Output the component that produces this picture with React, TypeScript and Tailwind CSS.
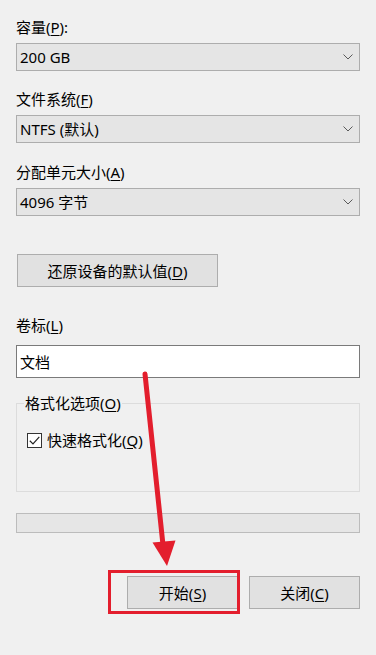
import type { ReactNode } from 'react';

const font = 'font-["Noto_Sans","Noto_Sans_CJK_SC",sans-serif]';

function Label({ children, className = '' }: { children: ReactNode; className?: string }) {
  return <div className={`h-5 leading-5 ${className}`}>{children}</div>;
}

function Combo({ value, className = '' }: { value: string; className?: string }) {
  return (
    <div
      className={`flex h-[28px] items-center justify-between border border-[#adadad] bg-[#e5e5e5] pl-[3px] pr-[6px] ${className}`}
    >
      <span className="leading-5">{value}</span>
      <svg width="10" height="6" viewBox="0 0 10 6" fill="none">
        <path d="M0.5 0.5 L5 5 L9.5 0.5" stroke="#5a5a5a" strokeWidth="1" />
      </svg>
    </div>
  );
}

function Button({ children, className = '' }: { children: ReactNode; className?: string }) {
  return (
    <div
      className={`flex h-[33px] items-center justify-center border border-[#adadad] bg-[#e1e1e1] leading-5 ${className}`}
    >
      {children}
    </div>
  );
}

export default function App() {
  return (
    <div className={`relative min-h-screen w-full bg-[#f0f0f0] px-4 pt-[17px] pb-10 text-[15px] text-black ${font}`}>
      <Label>
        容量(<span className="underline underline-offset-2">P</span>):
      </Label>
      <Combo value="200 GB" className="mt-[6px]" />

      <Label className="mt-[18px]">
        文件系统(<span className="underline underline-offset-2">F</span>)
      </Label>
      <Combo value="NTFS (默认)" className="mt-[6px]" />

      <Label className="mt-[19px]">
        分配单元大小(<span className="underline underline-offset-2">A</span>)
      </Label>
      <Combo value="4096 字节" className="mt-[6px]" />

      <Button className="mt-[38px] ml-[1px] w-[201px]">
        还原设备的默认值(<span className="underline underline-offset-2">D</span>)
      </Button>

      <Label className="mt-[28px]">
        卷标(<span className="underline underline-offset-2">L</span>)
      </Label>
      <div className="mt-[10px] flex h-[33px] items-center border border-[#7a7a7a] bg-white pl-[3px] leading-5">
        文档
      </div>

      <fieldset className="mt-[15px] border border-[#dcdcdc] pl-[10px] pb-[41px]">
        <legend className="-ml-[3px] px-[1px] leading-5">
          格式化选项(<span className="underline underline-offset-2">O</span>)
        </legend>
        <div className="mt-[17px] flex h-5 items-center gap-[5px]">
          <div className="flex h-[15px] w-[15px] items-center justify-center border border-[#333333] bg-white">
            <svg width="13" height="13" viewBox="0 0 13 13" fill="none">
              <path d="M1.8 6.8 L5 9.9 L11.3 2.9" stroke="#222222" strokeWidth="1.2" />
            </svg>
          </div>
          <span className="leading-5">
            快速格式化(<span className="underline underline-offset-2">Q</span>)
          </span>
        </div>
      </fieldset>

      <div className="mt-[21px] h-5 border border-[#bcbcbc] bg-[#e6e6e6]" />

      <div className="mt-[43px] flex justify-end gap-[11px]">
        <div className="relative">
          <Button className="w-[111px]">
            开始(<span className="underline underline-offset-2">S</span>)
          </Button>
          <div className="pointer-events-none absolute -left-[19px] -top-[6px] -right-[2px] -bottom-[5px] border-[3px] border-[#e31e2d]" />
        </div>
        <Button className="w-[111px]">
          关闭(<span className="underline underline-offset-2">C</span>)
        </Button>
      </div>

      {/* annotation arrow */}
      <svg
        className="pointer-events-none absolute left-0 top-0"
        width="376"
        height="655"
        viewBox="0 0 376 655"
        fill="none"
      >
        <path d="M145 374 L163 545" stroke="#e31e2d" strokeWidth="5" strokeLinecap="round" />
        <path d="M152.5 542.5 L175.5 540.5 L167 566 Z" fill="#e31e2d" />
      </svg>
    </div>
  );
}
